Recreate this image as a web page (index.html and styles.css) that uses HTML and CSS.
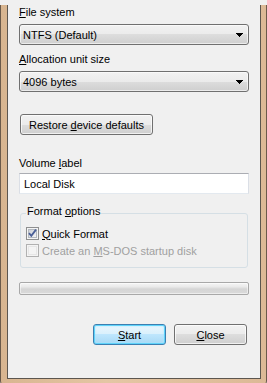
FILE: index.html
```html
<!DOCTYPE html>
<html lang="en">
<head>
  <meta charset="UTF-8">
  <meta name="viewport" content="width=device-width, initial-scale=1.0">
  <title>Format Local Disk</title>
  <link rel="stylesheet" href="styles.css">
</head>
<body>
  <div class="frame">
    <div class="client">
      <div class="field-label"><u>F</u>ile system</div>
      <div class="combo">
        <span>NTFS (Default)</span>
        <svg class="arrow" width="7" height="4" viewBox="0 0 7 4"><path d="M0 0h7v1H0zM1 1h5v1H1zM2 2h3v1H2zM3 3h1v1H3z"/></svg>
      </div>

      <div class="field-label second"><u>A</u>llocation unit size</div>
      <div class="combo">
        <span>4096 bytes</span>
        <svg class="arrow" width="7" height="4" viewBox="0 0 7 4"><path d="M0 0h7v1H0zM1 1h5v1H1zM2 2h3v1H2zM3 3h1v1H3z"/></svg>
      </div>

      <button class="btn restore-btn">Restore <u>d</u>evice defaults</button>

      <div class="field-label volume">Volume <u>l</u>abel</div>
      <input class="textbox" type="text" value="Local Disk">

      <fieldset class="group">
        <legend>Format <u>o</u>ptions</legend>
        <label class="check">
          <svg class="box" width="13" height="13" viewBox="0 0 13 13">
            <defs>
              <linearGradient id="boxFill" x1="0" y1="0" x2="1" y2="1">
                <stop offset="0" stop-color="#cbcfd5"/>
                <stop offset="1" stop-color="#f7f7f7"/>
              </linearGradient>
            </defs>
            <rect x="0.5" y="0.5" width="12" height="12" fill="#f4f4f4" stroke="#8e8f8f"/>
            <rect x="2.5" y="2.5" width="8" height="8" fill="url(#boxFill)" stroke="#b4b9bf"/>
            <path d="M3 6.2l2.3 2.6L10 2.6" fill="none" stroke="#4a5f97" stroke-width="1.8"/>
          </svg>
          <span><u>Q</u>uick Format</span>
        </label>
        <label class="check disabled">
          <svg class="box" width="13" height="13" viewBox="0 0 13 13">
            <rect x="0.5" y="0.5" width="12" height="12" fill="#f4f4f4" stroke="#b1b1b1"/>
            <rect x="2.5" y="2.5" width="8" height="8" fill="#f4f4f4" stroke="#e6e6e6"/>
          </svg>
          <span>Create an <u>M</u>S-DOS startup disk</span>
        </label>
      </fieldset>

      <div class="progress"></div>

      <div class="actions">
        <button class="btn default-btn"><u>S</u>tart</button>
        <button class="btn"><u>C</u>lose</button>
      </div>
    </div>
  </div>
</body>
</html>
```

FILE: styles.css
```css
body {
  margin: 0;
  font-family: "Liberation Sans", Arial, sans-serif;
  font-size: 11px;
  color: #000;
  background: #f0f0f0;
}

.frame {
  width: 267px;
  height: 383px;
  box-sizing: border-box;
  background: linear-gradient(90deg, #d8b590, #e4c6a4 40%, #dcb996);
  border: 1px solid #6b5a4a;
  border-top: none;
  border-radius: 0 0 7px 7px;
  padding: 0 5px 8px 6px;
}

.client {
  height: 100%;
  box-sizing: border-box;
  background: #f0f0f0;
  border: 1px solid #5c564f;
  border-top: none;
  padding: 0 11px;
}

.field-label {
  line-height: 15px;
  margin-top: 5px;
}

.field-label.second { margin-top: 7px; }
.field-label.volume { margin-top: 21px; }

.combo {
  margin-top: 4px;
  height: 21px;
  box-sizing: border-box;
  border: 1px solid #707070;
  border-radius: 3px;
  background: linear-gradient(#f2f2f2 0%, #ebebeb 50%, #dddddd 50%, #cfcfcf 100%);
  box-shadow: inset 0 0 0 1px rgba(255, 255, 255, 0.6);
  display: flex;
  align-items: center;
  justify-content: space-between;
  padding: 0 5px 0 3px;
}

.arrow { display: block; }

.btn {
  font: inherit;
  color: #000;
  height: 21px;
  width: 73px;
  padding: 0;
  border: 1px solid #707070;
  border-radius: 3px;
  background: linear-gradient(#f2f2f2 0%, #ebebeb 50%, #dddddd 50%, #cfcfcf 100%);
  box-shadow: inset 0 0 0 1px rgba(255, 255, 255, 0.7);
}

.restore-btn {
  display: block;
  width: 133px;
  margin: 22px 0 0 1px;
}

.default-btn {
  border-color: #3c7fb1;
  background: linear-gradient(#eaf6fd 0%, #d9f0fc 50%, #bee6fd 50%, #a7d9f5 100%);
  box-shadow: inset 0 0 0 1px #5fd3fa, inset 0 0 2px 1px #a6e8fd;
}

.textbox {
  display: block;
  width: 100%;
  height: 21px;
  box-sizing: border-box;
  margin: 2px 0 0;
  padding: 0 4px;
  font: inherit;
  color: #000;
  background: #fff;
  border: 1px solid #dbdfe6;
  border-top-color: #abadb3;
  border-bottom-color: #e3e9ef;
  outline: none;
}

.group {
  margin: 11px 1px 0;
  padding: 0 5px 8px;
  border: 1px solid #d5dfe5;
  border-radius: 3px;
}

.group legend {
  padding: 0 1px 3px;
  line-height: 13px;
}

.check {
  display: flex;
  align-items: center;
  gap: 3px;
  height: 17px;
}

.check:first-of-type { margin-top: 4px; }

.box { display: block; flex: none; }

.check.disabled { color: #a0a0a0; }

.progress {
  margin: 14px 0 0;
  height: 13px;
  box-sizing: border-box;
  border: 1px solid #a8a8a8;
  border-radius: 2px;
  background: linear-gradient(#f6f6f6 0%, #e9e9e9 35%, #d5d5d5 55%, #dadada 100%);
  box-shadow: inset 0 0 0 1px rgba(255, 255, 255, 0.5);
}

.actions {
  display: flex;
  justify-content: flex-end;
  gap: 8px;
  margin-top: 29px;
  padding-right: 2px;
}
```
